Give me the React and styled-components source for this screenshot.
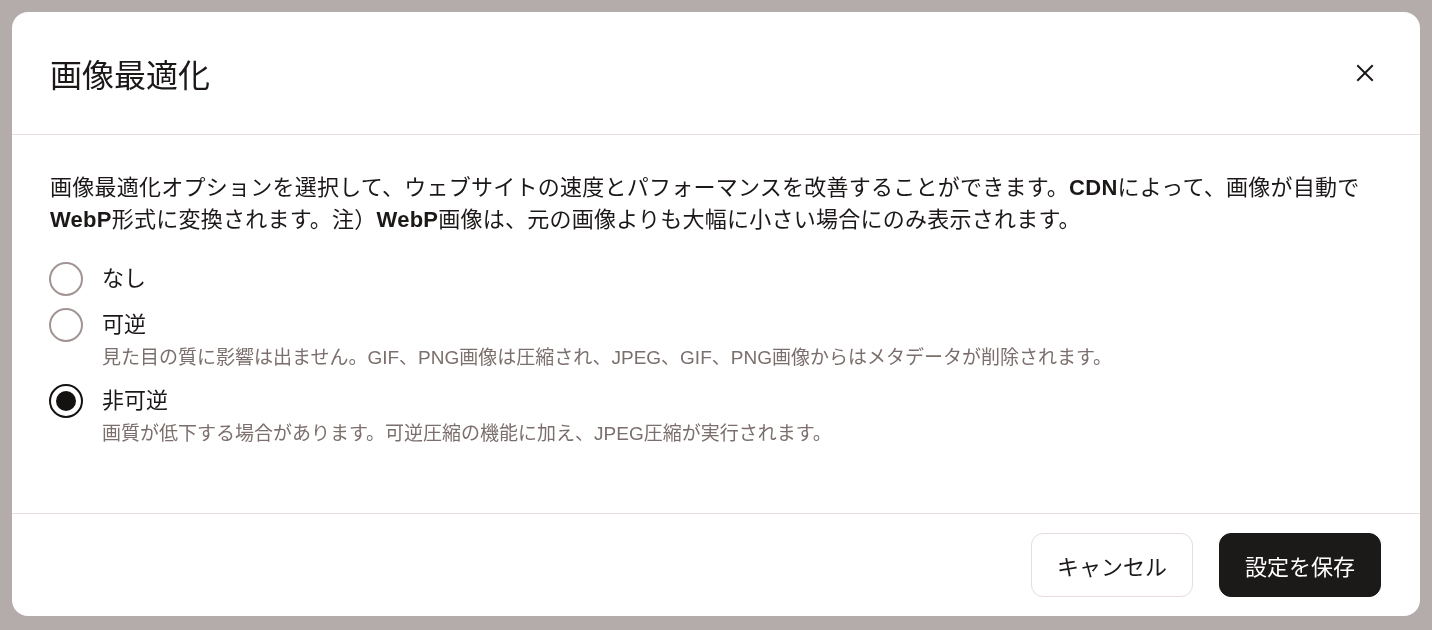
import React, { useState } from 'react';
import styled, { createGlobalStyle, css } from 'styled-components';

const GlobalStyle = createGlobalStyle`
	html, body {
		margin: 0;
		padding: 0;
		height: 100%;
	}
	body {
		font-family: "Liberation Sans", "Noto Sans CJK JP", sans-serif;
		color: #1c1818;
		background: #ffffff;
		overflow: hidden;
	}
	* {
		box-sizing: border-box;
	}
`;

const Page = styled.div`
	width: 1432px;
	height: 630px;
	padding: 0 40px;
`;

const PageHeading = styled.h1`
	margin: 0;
	padding-top: 6px;
	height: 75px;
	font-size: 24px;
	font-weight: 400;
	border-bottom: 1px solid #d9d2d2;
`;

const PageSection = styled.div`
	margin-top: 270px;
	height: 38px;
	border-top: 1px solid #d9d2d2;
	border-bottom: 1px solid #d9d2d2;
	background: #f6f3f3;
`;

const Overlay = styled.div`
	position: fixed;
	inset: 0;
	background: rgba(92, 72, 72, 0.46);
	display: flex;
	justify-content: center;
	align-items: flex-start;
	padding-top: 12px;
`;

const Dialog = styled.div`
	width: 1408px;
	height: 604px;
	background: #ffffff;
	border-radius: 16px;
	display: flex;
	flex-direction: column;
	overflow: hidden;
`;

const Header = styled.div`
	height: 123px;
	flex-shrink: 0;
	display: flex;
	align-items: center;
	justify-content: space-between;
	padding: 0 35px 0 38px;
	border-bottom: 1px solid #e9e1e1;
`;

const Title = styled.h2`
	margin: 0;
	font-size: 32px;
	font-weight: 400;
	color: #1c1818;
`;

const CloseButton = styled.button`
	width: 40px;
	height: 40px;
	border: none;
	background: transparent;
	padding: 0;
	display: flex;
	align-items: center;
	justify-content: center;
	cursor: pointer;
	color: #1c1818;
`;

const Body = styled.div`
	flex: 1;
	padding: 37px 38px 0;
`;

const Description = styled.p`
	margin: 0;
	font-size: 22px;
	line-height: 32px;
	letter-spacing: 0.25px;
	color: #1c1818;

	b {
		font-weight: 700;
	}
`;

const RadioGroup = styled.div`
	margin-top: 26px;
	display: flex;
	flex-direction: column;
	gap: 12px;
`;

const Option = styled.label`
	display: grid;
	grid-template-columns: 34px 1fr;
	column-gap: 19px;
	margin-left: -1px;
	cursor: pointer;
`;

const Circle = styled.span`
	width: 34px;
	height: 34px;
	border-radius: 50%;
	border: 2px solid #a19593;
	display: flex;
	align-items: center;
	justify-content: center;

	${(p) => p.$checked && css`
		border-color: #141111;
		&::after {
			content: "";
			width: 20px;
			height: 20px;
			border-radius: 50%;
			background: #141111;
		}
	`}
`;

const OptionLabel = styled.span`
	font-size: 22px;
	line-height: 34px;
	color: #1c1818;
`;

const OptionHint = styled.span`
	grid-column: 2;
	margin-top: 2px;
	font-size: 19px;
	line-height: 28px;
	color: #7b6f6d;
`;

const Footer = styled.div`
	height: 103px;
	flex-shrink: 0;
	border-top: 1px solid #e9e1e1;
	display: flex;
	justify-content: flex-end;
	align-items: flex-start;
	gap: 26px;
	padding: 19px 39px 0;
`;

const Button = styled.button`
	height: 64px;
	padding: 0 25px;
	border-radius: 12px;
	font-family: inherit;
	font-size: 22px;
	cursor: pointer;
	border: 1px solid #e6dcdc;
	background: #ffffff;
	color: #1c1818;

	${(p) => p.$primary && css`
		background: #1c1919;
		border-color: #1c1919;
		color: #ffffff;
	`}
`;

const CloseIcon = () => (
	<svg width="18" height="18" viewBox="0 0 18 18" fill="none">
		<path d="M2 2L16 16M16 2L2 16" stroke="currentColor" strokeWidth="2" strokeLinecap="square" />
	</svg>
);

const OPTIONS = [
	{ id: 'none', label: 'なし' },
	{ id: 'lossless', label: '可逆', hint: '見た目の質に影響は出ません。GIF、PNG画像は圧縮され、JPEG、GIF、PNG画像からはメタデータが削除されます。' },
	{ id: 'lossy', label: '非可逆', hint: '画質が低下する場合があります。可逆圧縮の機能に加え、JPEG圧縮が実行されます。' },
];

export default function App() {
	const [value, setValue] = useState('lossy');

	return (
		<>
			<GlobalStyle />
			<Page>
				<PageHeading>CDNが存在しています</PageHeading>
				<PageSection />
			</Page>
			<Overlay>
				<Dialog>
					<Header>
						<Title>画像最適化</Title>
						<CloseButton aria-label="閉じる">
							<CloseIcon />
						</CloseButton>
					</Header>
					<Body>
						<Description>
							画像最適化オプションを選択して、ウェブサイトの速度とパフォーマンスを改善することができます。<b>CDN</b>によって、画像が自動で<b>WebP</b>形式に変換されます。注）<b>WebP</b>画像は、元の画像よりも大幅に小さい場合にのみ表示されます。
						</Description>
						<RadioGroup>
							{OPTIONS.map((opt) => (
								<Option key={opt.id} onClick={() => setValue(opt.id)}>
									<Circle $checked={value === opt.id} />
									<OptionLabel>{opt.label}</OptionLabel>
									{opt.hint && <OptionHint>{opt.hint}</OptionHint>}
								</Option>
							))}
						</RadioGroup>
					</Body>
					<Footer>
						<Button>キャンセル</Button>
						<Button $primary>設定を保存</Button>
					</Footer>
				</Dialog>
			</Overlay>
		</>
	);
}
